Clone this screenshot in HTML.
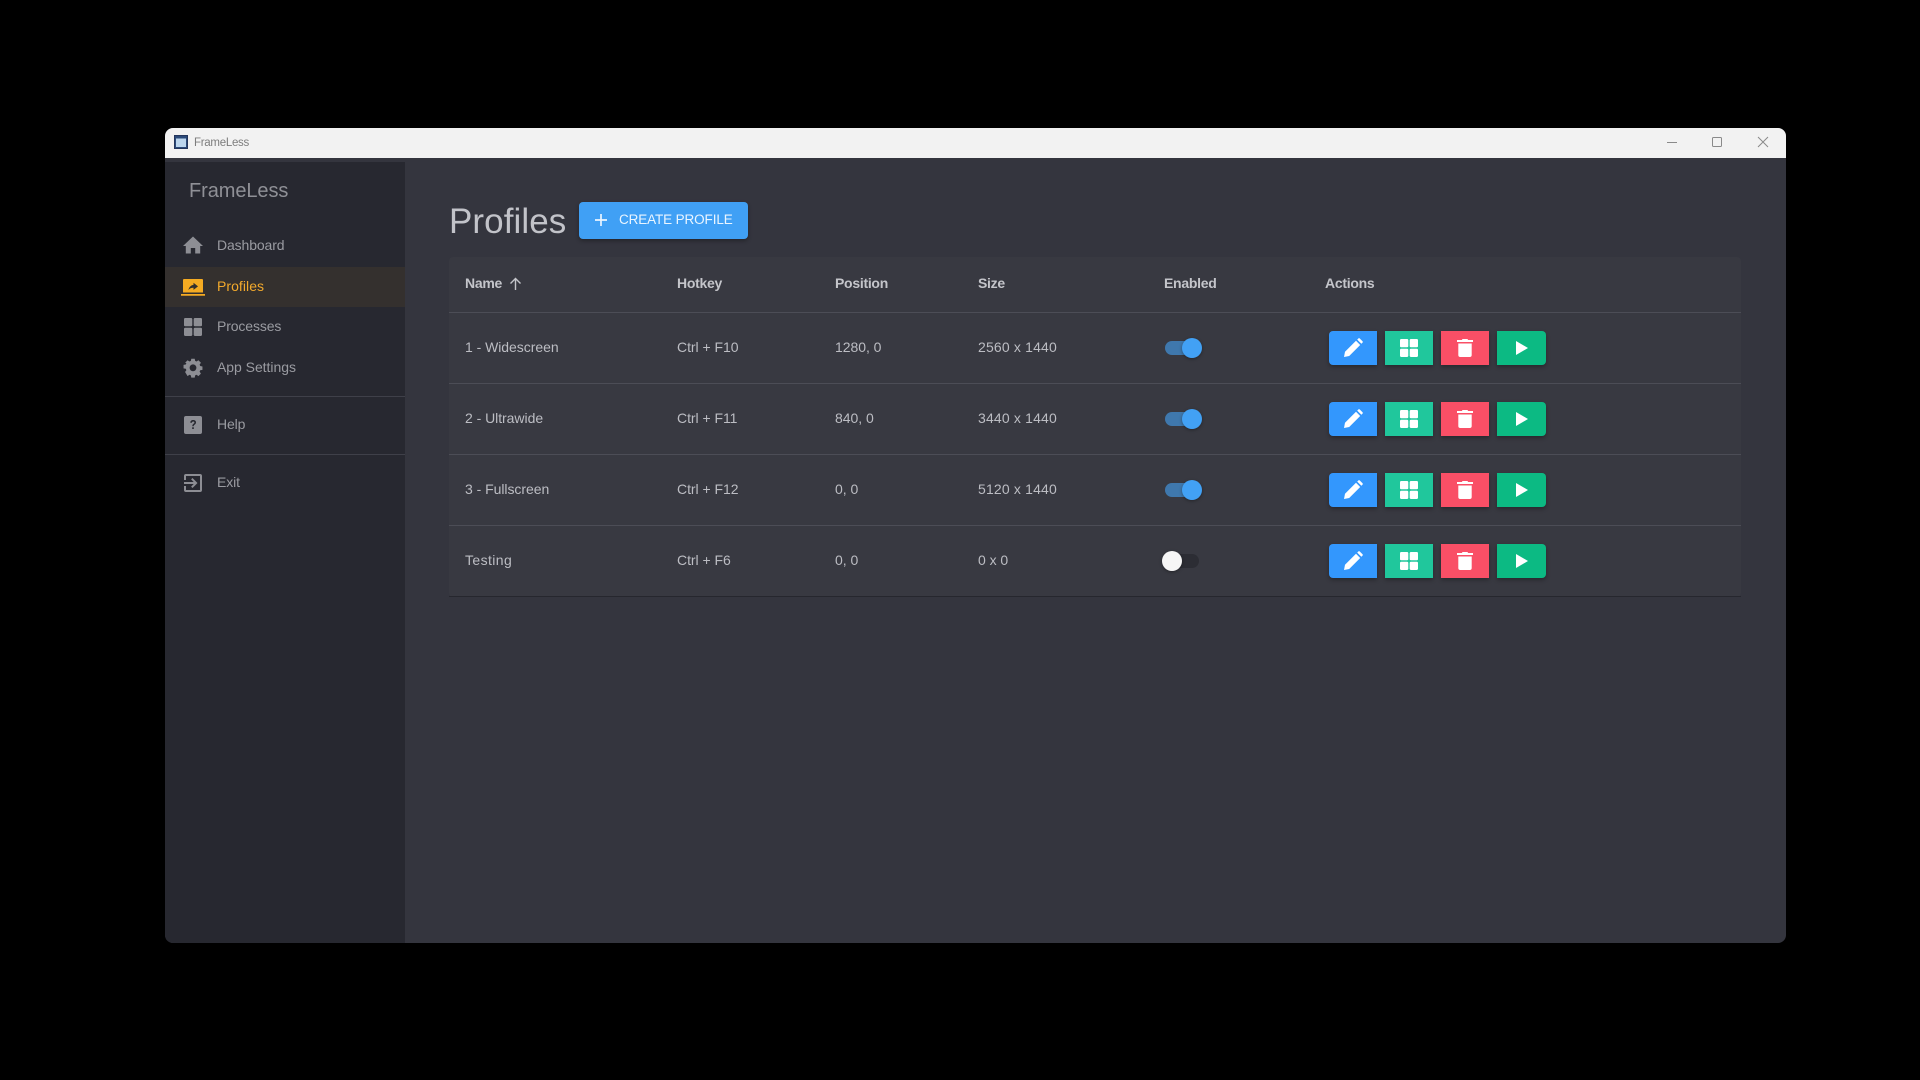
<!DOCTYPE html>
<html><head><meta charset="utf-8"><title>FrameLess</title>
<style>
*{box-sizing:border-box}
html,body{margin:0;width:1920px;height:1080px;overflow:hidden;background:#000;font-family:"Liberation Sans",sans-serif}
.a{position:absolute}
.t{position:absolute;white-space:nowrap;line-height:20px;height:20px}
#win{left:165px;top:128px;width:1621px;height:815px;background:#34353e;border-radius:8px;overflow:hidden}
#bar{left:165px;top:128px;width:1621px;height:30px;background:#f2f2f2;border-radius:8px 8px 0 0}
#side{left:165px;top:162px;width:240px;height:781px;background:#272830;border-radius:0 0 0 8px}
.nav{font-size:14px;color:#9a9ba1;left:217px;letter-spacing:-.12px}
.line{left:165px;width:240px;height:1px;background:#3f4049}
#table{left:449px;top:257px;width:1292px;height:340px;background:#383941;border-radius:4px}
.hl{left:449px;width:1292px;height:1px;background:#4c4d56}
.th{font-size:14px;font-weight:bold;color:#c4c5ca;letter-spacing:-.28px}
.td{font-size:14px;color:#bcbdc3;letter-spacing:-.04px}
.sz{letter-spacing:.17px}
.btn{position:absolute;height:34px;box-shadow:0 2px 4px rgba(0,0,0,.3)}
.btn svg{position:absolute;left:50%;top:50%;transform:translate(-50%,-50%)}
.trk{position:absolute;height:14px;border-radius:7px}
.thb{position:absolute;width:20px;height:20px;border-radius:50%;box-shadow:0 1px 3px rgba(0,0,0,.35)}
</style></head><body>
<div id="win" class="a"></div>
<div id="bar" class="a"></div>
<svg class="a" style="left:174px;top:135px" width="14" height="14" viewBox="0 0 14 14"><rect x=".5" y=".5" width="13" height="13" fill="#2b4a7a" stroke="#24365c"/><rect x="2" y="3.500" width="10" height="8.500" fill="#bcd6ee"/></svg>
<div class="t" style="left:194px;top:132px;font-size:11.5px;color:#7d7d7d;line-height:22px;letter-spacing:-.28px">FrameLess</div>
<svg class="a" style="left:1660px;top:131px" width="120" height="22" viewBox="0 0 120 22" fill="none" stroke="#8a8a8a" stroke-width="1"><path d="M7 11.500H17"/><rect x="52.500" y="6.500" width="9" height="9" rx="1"/><path d="M98 6l10 10M108 6l-10 10"/></svg>

<div id="side" class="a"></div>
<div class="t" style="left:189px;top:181px;font-size:20px;color:#8f9096;letter-spacing:-.08px">FrameLess</div>
<div class="a" style="left:165px;top:267px;width:240px;height:40px;background:#34302e"></div>

<svg class="a" style="left:183px;top:235px" width="20" height="20" viewBox="0 0 20 20" fill="#8d8e94"><path d="M10 1.500 0 11h2.800v7.500h5v-5.500h4.400v5.500h5V11H20z"/></svg>
<div class="t nav" style="top:235px">Dashboard</div>

<svg class="a" style="left:181px;top:279px" width="24" height="18" viewBox="0 0 24 18"><path fill="#f5ab22" d="M3 0h18a1 1 0 0 1 1 1v12.500H2V1a1 1 0 0 1 1-1zM0 15h24v1.700H0z"/><path fill="#33302e" d="M12.500 3.800 17 7.400l-4.500 3.500V8.800c-2.300 0-3.900.7-5 2.300.4-2.500 1.900-4.700 5-5.200z"/></svg>
<div class="t nav" style="top:276px;color:#f2a92c;letter-spacing:.05px">Profiles</div>

<svg class="a" style="left:184px;top:318px" width="18" height="18" viewBox="0 0 18 18" fill="#8d8e94"><rect width="8.300" height="8.300" rx="1.200"/><rect x="9.700" width="8.300" height="8.300" rx="1.200"/><rect y="9.700" width="8.300" height="8.300" rx="1.200"/><rect x="9.700" y="9.700" width="8.300" height="8.300" rx="1.200"/></svg>
<div class="t nav" style="top:316px">Processes</div>

<svg class="a" style="left:183px;top:358px" width="20" height="20" viewBox="0 0 20 20"><path fill="#8d8e94" d="M8 0h4l.5 2.600 1.600.7L16.300 1.800l2.900 2.900-1.500 2.200.7 1.600 2.600.5v4l-2.600.5-.7 1.600 1.500 2.200-2.900 2.900-2.200-1.500-1.600.7-.5 2.600H8l-.5-2.600-1.600-.7-2.200 1.500L.8 15.500l1.500-2.200-.7-1.600L-1 11.200v-4l2.600-.5.700-1.600L.8 4.700l2.900-2.900 2.200 1.500 1.600-.7z" transform="translate(1.400 .7) scale(.86)"/><circle cx="10" cy="9.800" r="3.400" fill="#272830"/></svg>
<div class="t nav" style="top:357px;letter-spacing:-.04px">App Settings</div>

<div class="a line" style="top:396px"></div>
<svg class="a" style="left:184px;top:416px" width="18" height="18" viewBox="0 0 18 18"><rect width="18" height="18" rx="2" fill="#8d8e94"/><path d="M6.300 6.700c0-1.700 1.200-2.700 2.900-2.700 1.600 0 2.800.9 2.800 2.400 0 1.100-.6 1.700-1.400 2.300-.7.500-.9.800-.9 1.600H8.300c0-1.200.3-1.800 1.100-2.400.6-.5 1-.8 1-1.400 0-.6-.5-1-1.200-1-.7 0-1.200.5-1.300 1.200zM8.200 11.300h1.600V13H8.200z" fill="#272830"/></svg>
<div class="t nav" style="top:414px">Help</div>

<div class="a line" style="top:454px"></div>
<svg class="a" style="left:184px;top:474px" width="18" height="18" viewBox="0 0 18 18"><path fill="#8d8e94" d="M2 0h14a2 2 0 0 1 2 2v14a2 2 0 0 1-2 2H2a2 2 0 0 1-2-2v-4h2v4h14V2H2v4H0V2a2 2 0 0 1 2-2z"/><path fill="#8d8e94" d="M7.100 12.600 8.500 14l5-5-5-5-1.400 1.400L9.700 8H0v2h9.700z"/></svg>
<div class="t nav" style="top:472px">Exit</div>

<div class="t" style="left:449px;top:200px;height:44px;line-height:44px;font-size:35px;color:#c2c3c9;letter-spacing:.08px">Profiles</div>
<div class="a" style="left:579px;top:202px;width:169px;height:37px;background:#40a0f5;border-radius:4px;box-shadow:0 2px 4px rgba(0,0,0,.3)"></div>
<svg class="a" style="left:595px;top:214px" width="12" height="12" viewBox="0 0 12 12" fill="none" stroke="#eaf5ff" stroke-width="1.700"><path d="M6 0v12M0 6h12"/></svg>
<div class="t" style="left:619px;top:210px;font-size:13.5px;color:#eaf5ff;letter-spacing:-.12px">CREATE PROFILE</div>

<div id="table" class="a"></div>
<div class="a hl" style="top:312px"></div>
<div class="a hl" style="top:383px"></div>
<div class="a hl" style="top:454px"></div>
<div class="a hl" style="top:525px"></div>
<div class="a hl" style="top:596px;background:#26272e"></div>

<div class="t th" style="left:465px;top:273px">Name</div>
<svg class="a" style="left:509px;top:277px" width="13" height="13" viewBox="0 0 13 13" fill="none" stroke="#c4c5ca" stroke-width="1.400"><path d="M6.500 13V1.500M1.500 6.500l5-5 5 5"/></svg>
<div class="t th" style="left:677px;top:273px">Hotkey</div>
<div class="t th" style="left:835px;top:273px">Position</div>
<div class="t th" style="left:978px;top:273px">Size</div>
<div class="t th" style="left:1164px;top:273px">Enabled</div>
<div class="t th" style="left:1325px;top:273px">Actions</div>

<div class="t td" style="left:465px;top:337px">1 - Widescreen</div>
<div class="t td" style="left:677px;top:337px">Ctrl + F10</div>
<div class="t td" style="left:835px;top:337px">1280, 0</div>
<div class="t td sz" style="left:978px;top:337px">2560 x 1440</div>
<div class="trk" style="left:1165px;top:341px;width:35px;background:#3f78ad"></div><div class="thb" style="left:1182px;top:338px;background:#42a1f5"></div>
<div class="btn" style="left:1329px;top:331px;width:48px;background:#3397fd;border-radius:4px 0 0 4px"><svg width="20" height="20" viewBox="0 0 20 20"><path fill="#fff" d="M1 19l1-5.200L13 2.800l4.200 4.200L6.200 18zM14.200 1.600l1-1a1.200 1.200 0 0 1 1.700 0l2.500 2.500a1.200 1.200 0 0 1 0 1.700l-1 1z"/></svg></div>
<div class="btn" style="left:1385px;top:331px;width:48px;background:#20c79c"><svg width="18" height="18" viewBox="0 0 18 18" fill="#fff"><rect width="8.300" height="8.300" rx="1.200"/><rect x="9.700" width="8.300" height="8.300" rx="1.200"/><rect y="9.700" width="8.300" height="8.300" rx="1.200"/><rect x="9.700" y="9.700" width="8.300" height="8.300" rx="1.200"/></svg></div>
<div class="btn" style="left:1441px;top:331px;width:48px;background:#f94f66"><svg width="16" height="18" viewBox="0 0 16 18" fill="#fff"><path d="M5.500 0h5l.6 1H16v2H0V1h4.900zM1.300 4.500h13.400V16a2 2 0 0 1-2 2H3.300a2 2 0 0 1-2-2z"/></svg></div>
<div class="btn" style="left:1497px;top:331px;width:49px;background:#0cba83;border-radius:0 4px 4px 0"><svg width="12" height="14" viewBox="0 0 12 14" fill="#fff"><path d="M0 0l12 7L0 14z"/></svg></div>

<div class="t td" style="left:465px;top:408px">2 - Ultrawide</div>
<div class="t td" style="left:677px;top:408px">Ctrl + F11</div>
<div class="t td" style="left:835px;top:408px">840, 0</div>
<div class="t td sz" style="left:978px;top:408px">3440 x 1440</div>
<div class="trk" style="left:1165px;top:412px;width:35px;background:#3f78ad"></div><div class="thb" style="left:1182px;top:409px;background:#42a1f5"></div>
<div class="btn" style="left:1329px;top:402px;width:48px;background:#3397fd;border-radius:4px 0 0 4px"><svg width="20" height="20" viewBox="0 0 20 20"><path fill="#fff" d="M1 19l1-5.200L13 2.800l4.200 4.200L6.200 18zM14.200 1.600l1-1a1.200 1.200 0 0 1 1.700 0l2.500 2.500a1.200 1.200 0 0 1 0 1.700l-1 1z"/></svg></div>
<div class="btn" style="left:1385px;top:402px;width:48px;background:#20c79c"><svg width="18" height="18" viewBox="0 0 18 18" fill="#fff"><rect width="8.300" height="8.300" rx="1.200"/><rect x="9.700" width="8.300" height="8.300" rx="1.200"/><rect y="9.700" width="8.300" height="8.300" rx="1.200"/><rect x="9.700" y="9.700" width="8.300" height="8.300" rx="1.200"/></svg></div>
<div class="btn" style="left:1441px;top:402px;width:48px;background:#f94f66"><svg width="16" height="18" viewBox="0 0 16 18" fill="#fff"><path d="M5.500 0h5l.6 1H16v2H0V1h4.900zM1.300 4.500h13.400V16a2 2 0 0 1-2 2H3.300a2 2 0 0 1-2-2z"/></svg></div>
<div class="btn" style="left:1497px;top:402px;width:49px;background:#0cba83;border-radius:0 4px 4px 0"><svg width="12" height="14" viewBox="0 0 12 14" fill="#fff"><path d="M0 0l12 7L0 14z"/></svg></div>

<div class="t td" style="left:465px;top:479px">3 - Fullscreen</div>
<div class="t td" style="left:677px;top:479px">Ctrl + F12</div>
<div class="t td" style="left:835px;top:479px">0, 0</div>
<div class="t td sz" style="left:978px;top:479px">5120 x 1440</div>
<div class="trk" style="left:1165px;top:483px;width:35px;background:#3f78ad"></div><div class="thb" style="left:1182px;top:480px;background:#42a1f5"></div>
<div class="btn" style="left:1329px;top:473px;width:48px;background:#3397fd;border-radius:4px 0 0 4px"><svg width="20" height="20" viewBox="0 0 20 20"><path fill="#fff" d="M1 19l1-5.200L13 2.800l4.200 4.200L6.200 18zM14.200 1.600l1-1a1.200 1.200 0 0 1 1.700 0l2.500 2.500a1.200 1.200 0 0 1 0 1.700l-1 1z"/></svg></div>
<div class="btn" style="left:1385px;top:473px;width:48px;background:#20c79c"><svg width="18" height="18" viewBox="0 0 18 18" fill="#fff"><rect width="8.300" height="8.300" rx="1.200"/><rect x="9.700" width="8.300" height="8.300" rx="1.200"/><rect y="9.700" width="8.300" height="8.300" rx="1.200"/><rect x="9.700" y="9.700" width="8.300" height="8.300" rx="1.200"/></svg></div>
<div class="btn" style="left:1441px;top:473px;width:48px;background:#f94f66"><svg width="16" height="18" viewBox="0 0 16 18" fill="#fff"><path d="M5.500 0h5l.6 1H16v2H0V1h4.900zM1.300 4.500h13.400V16a2 2 0 0 1-2 2H3.300a2 2 0 0 1-2-2z"/></svg></div>
<div class="btn" style="left:1497px;top:473px;width:49px;background:#0cba83;border-radius:0 4px 4px 0"><svg width="12" height="14" viewBox="0 0 12 14" fill="#fff"><path d="M0 0l12 7L0 14z"/></svg></div>

<div class="t td" style="left:465px;top:550px;letter-spacing:.4px">Testing</div>
<div class="t td" style="left:677px;top:550px">Ctrl + F6</div>
<div class="t td" style="left:835px;top:550px">0, 0</div>
<div class="t td" style="left:978px;top:550px">0 x 0</div>
<div class="trk" style="left:1165px;top:554px;width:34px;background:#2c2d34"></div><div class="thb" style="left:1162px;top:551px;background:#f6f6f6"></div>
<div class="btn" style="left:1329px;top:544px;width:48px;background:#3397fd;border-radius:4px 0 0 4px"><svg width="20" height="20" viewBox="0 0 20 20"><path fill="#fff" d="M1 19l1-5.200L13 2.800l4.200 4.200L6.200 18zM14.200 1.600l1-1a1.200 1.200 0 0 1 1.700 0l2.500 2.500a1.200 1.200 0 0 1 0 1.700l-1 1z"/></svg></div>
<div class="btn" style="left:1385px;top:544px;width:48px;background:#20c79c"><svg width="18" height="18" viewBox="0 0 18 18" fill="#fff"><rect width="8.300" height="8.300" rx="1.200"/><rect x="9.700" width="8.300" height="8.300" rx="1.200"/><rect y="9.700" width="8.300" height="8.300" rx="1.200"/><rect x="9.700" y="9.700" width="8.300" height="8.300" rx="1.200"/></svg></div>
<div class="btn" style="left:1441px;top:544px;width:48px;background:#f94f66"><svg width="16" height="18" viewBox="0 0 16 18" fill="#fff"><path d="M5.500 0h5l.6 1H16v2H0V1h4.900zM1.300 4.500h13.400V16a2 2 0 0 1-2 2H3.300a2 2 0 0 1-2-2z"/></svg></div>
<div class="btn" style="left:1497px;top:544px;width:49px;background:#0cba83;border-radius:0 4px 4px 0"><svg width="12" height="14" viewBox="0 0 12 14" fill="#fff"><path d="M0 0l12 7L0 14z"/></svg></div>
</body></html>
